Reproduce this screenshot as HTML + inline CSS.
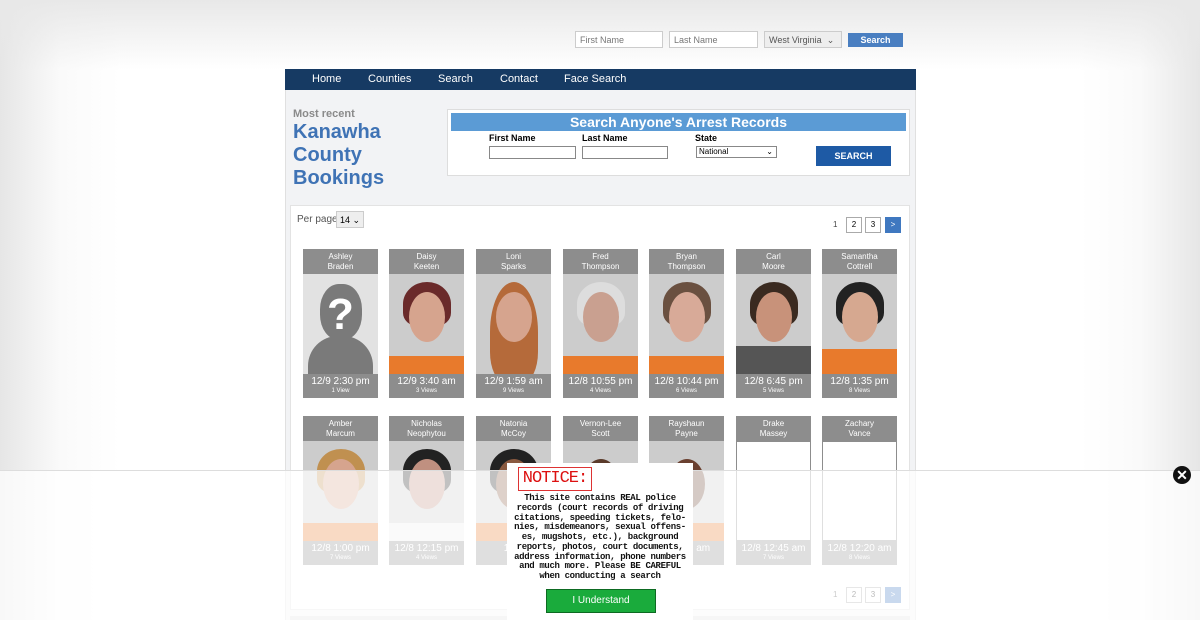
<!DOCTYPE html><html><head><meta charset="utf-8"><style>
*{box-sizing:border-box;margin:0;padding:0}
body{width:1200px;height:620px;overflow:hidden;font-family:"Liberation Sans",sans-serif;background:linear-gradient(90deg,#e6e6e6 0,#fafafa 60px,#fff 120px,#fff 1080px,#fafafa 1140px,#e6e6e6 1200px);position:relative}
.top{position:absolute;left:0;top:0;width:1200px;height:70px;background:linear-gradient(#e8e8e8,rgba(255,255,255,0))}
.ab{position:absolute}
.inp{border:1px solid #ccc;background:#fff;font-size:9px;color:#777;padding:3px 4px;height:17px;white-space:nowrap}
.nav{left:285px;top:69px;width:631px;height:21px;background:#163a63;color:#fff;font-size:11px}
.nav span{position:absolute;top:4px}
.main{left:285px;top:90px;width:631px;height:530px;background:#f2f3f5;border-left:1px solid #e0e0e0;border-right:1px solid #e0e0e0}
.card{position:absolute;width:75px;height:149px;background:#8d8d8d;color:#fff;text-align:center}
.card .h{height:25px;font-size:8px;line-height:10px;padding-top:3px}
.card .p{height:100px;background:#ccc;position:relative;overflow:hidden}
.card .d{font-size:10px;padding-top:2px}
.card .v{font-size:6px;margin-top:1px}
.face{position:absolute;left:20px;top:18px;width:36px;height:50px;border-radius:50%;background:#d6a48e}
.hair{position:absolute;left:14px;top:8px;width:48px;height:44px;border-radius:50% 50% 30% 30%}
.orange{position:absolute;left:0;bottom:0;width:75px;height:18px;background:#e87a2c}
</style></head><body>
<div class="top"></div>
<div class="ab inp" style="left:575px;top:31px;width:88px">First Name</div>
<div class="ab inp" style="left:669px;top:31px;width:89px">Last Name</div>
<div class="ab inp" style="left:764px;top:31px;width:78px;background:#eee;color:#555">West Virginia &nbsp;⌄</div>
<div class="ab" style="left:848px;top:33px;width:55px;height:14px;background:#4a7fc1;color:#fff;font-size:9px;font-weight:bold;text-align:center;line-height:14px">Search</div>
<div class="ab nav"><span style="left:27px">Home</span><span style="left:83px">Counties</span><span style="left:153px">Search</span><span style="left:215px">Contact</span><span style="left:279px">Face Search</span></div>
<div class="ab main"></div>
<div class="ab" style="left:293px;top:108px;font-size:11px;color:#8a8a8a;font-weight:bold">Most recent</div>
<div class="ab" style="left:293px;top:121px;font-size:20px;line-height:23px;color:#3f73b5;font-weight:bold">Kanawha<br>County<br>Bookings</div>
<div class="ab" style="left:447px;top:109px;width:463px;height:67px;background:#fff;border:1px solid #ddd"></div>
<div class="ab" style="left:451px;top:113px;width:455px;height:18px;background:#5b9bd5;color:#fff;font-weight:bold;font-size:14px;text-align:center;line-height:18px">Search Anyone's Arrest Records</div>
<div class="ab" style="left:489px;top:133px;font-size:9px;font-weight:bold">First Name</div>
<div class="ab" style="left:582px;top:133px;font-size:9px;font-weight:bold">Last Name</div>
<div class="ab" style="left:695px;top:133px;font-size:9px;font-weight:bold">State</div>
<div class="ab" style="left:489px;top:146px;width:87px;height:13px;border:1px solid #888;background:#fff"></div>
<div class="ab" style="left:582px;top:146px;width:86px;height:13px;border:1px solid #888;background:#fff"></div>
<div class="ab" style="left:696px;top:146px;width:81px;height:12px;border:1px solid #888;background:#fff;font-size:8px;padding-left:2px;line-height:10px">National<span style="position:absolute;right:3px">⌄</span></div>
<div class="ab" style="left:816px;top:146px;width:75px;height:20px;background:#1e5aa5;color:#fff;font-size:9px;font-weight:bold;text-align:center;line-height:20px">SEARCH</div>
<div class="ab" style="left:290px;top:205px;width:620px;height:405px;background:#fff;border:1px solid #e3e3e3"></div>
<div class="ab" style="left:297px;top:214px;font-size:10px;color:#555">Per page</div>
<div class="ab" style="left:336px;top:211px;width:28px;height:17px;border:1px solid #ccc;background:#eee;font-size:9px;padding:3px;white-space:nowrap">14 ⌄</div>
<div class="ab" style="left:833px;top:220px;font-size:8px;color:#444">1</div>
<div class="ab" style="left:846px;top:217px;width:16px;height:16px;border:1px solid #aaa;font-size:8px;text-align:center;line-height:14px">2</div>
<div class="ab" style="left:865px;top:217px;width:16px;height:16px;border:1px solid #aaa;font-size:8px;text-align:center;line-height:14px">3</div>
<div class="ab" style="left:885px;top:217px;width:16px;height:16px;background:#3f78c0;color:#fff;font-size:8px;text-align:center;line-height:16px">&gt;</div>

<div class="card" style="left:303px;top:249px"><div class="h">Ashley<br>Braden</div><div class="p" style="background:#e2e2e2"><div style="position:absolute;left:17px;top:10px;width:42px;height:56px;border-radius:45%;background:#7a7a7a"></div><div style="position:absolute;left:5px;top:62px;width:65px;height:40px;border-radius:30px 30px 0 0;background:#7a7a7a"></div><div style="position:absolute;left:0;top:16px;width:75px;text-align:center;font-size:44px;font-weight:bold;color:#fff">?</div></div><div class="d">12/9 2:30 pm</div><div class="v">1 View</div></div>
<div class="card" style="left:389px;top:249px"><div class="h">Daisy<br>Keeten</div><div class="p"><div class="hair" style="background:#6a2a2a"></div><div class="face"></div><div class="orange"></div></div><div class="d">12/9 3:40 am</div><div class="v">3 Views</div></div>
<div class="card" style="left:476px;top:249px"><div class="h">Loni<br>Sparks</div><div class="p"><div class="hair" style="background:#b56a3a;height:100px"></div><div class="face"></div></div><div class="d">12/9 1:59 am</div><div class="v">9 Views</div></div>
<div class="card" style="left:563px;top:249px"><div class="h">Fred<br>Thompson</div><div class="p"><div class="hair" style="background:#ddd"></div><div class="face" style="background:#c9a090"></div><div class="orange"></div></div><div class="d">12/8 10:55 pm</div><div class="v">4 Views</div></div>
<div class="card" style="left:649px;top:249px"><div class="h">Bryan<br>Thompson</div><div class="p"><div class="hair" style="background:#6a5040"></div><div class="face" style="background:#d8aa98"></div><div class="orange"></div></div><div class="d">12/8 10:44 pm</div><div class="v">6 Views</div></div>
<div class="card" style="left:736px;top:249px"><div class="h">Carl<br>Moore</div><div class="p"><div class="hair" style="background:#3a2a20"></div><div class="face" style="background:#c8927a"></div><div class="orange" style="background:#555;height:28px"></div></div><div class="d">12/8 6:45 pm</div><div class="v">5 Views</div></div>
<div class="card" style="left:822px;top:249px"><div class="h">Samantha<br>Cottrell</div><div class="p"><div class="hair" style="background:#222"></div><div class="face" style="background:#d6a890"></div><div class="orange" style="height:25px"></div></div><div class="d">12/8 1:35 pm</div><div class="v">8 Views</div></div>

<div class="card" style="left:303px;top:416px"><div class="h">Amber<br>Marcum</div><div class="p"><div class="hair" style="background:#c09050"></div><div class="face"></div><div class="orange"></div></div><div class="d">12/8 1:00 pm</div><div class="v">7 Views</div></div>
<div class="card" style="left:389px;top:416px"><div class="h">Nicholas<br>Neophytou</div><div class="p"><div class="hair" style="background:#222"></div><div class="face" style="background:#c09080"></div><div class="orange" style="background:#eee"></div></div><div class="d">12/8 12:15 pm</div><div class="v">4 Views</div></div>
<div class="card" style="left:476px;top:416px"><div class="h">Natonia<br>McCoy</div><div class="p"><div class="hair" style="background:#222"></div><div class="face" style="background:#8a5a40"></div><div class="orange"></div></div><div class="d">12/8</div><div class="v">.</div></div>
<div class="card" style="left:563px;top:416px"><div class="h">Vernon-Lee<br>Scott</div><div class="p"><div class="face" style="background:#5a3a2a"></div><div class="orange"></div></div><div class="d"></div></div>
<div class="card" style="left:649px;top:416px"><div class="h">Rayshaun<br>Payne</div><div class="p"><div class="face" style="background:#6a4030"></div><div class="orange"></div></div><div class="d">&nbsp;&nbsp;&nbsp;&nbsp;&nbsp;&nbsp;&nbsp;&nbsp;&nbsp;5 am</div></div>
<div class="card" style="left:736px;top:416px"><div class="h">Drake<br>Massey</div><div class="p" style="background:#fff;border:1px solid #8d8d8d"></div><div class="d">12/8 12:45 am</div><div class="v">7 Views</div></div>
<div class="card" style="left:822px;top:416px"><div class="h">Zachary<br>Vance</div><div class="p" style="background:#fff;border:1px solid #8d8d8d"></div><div class="d">12/8 12:20 am</div><div class="v">8 Views</div></div>
<div class="ab" style="left:833px;top:590px;font-size:8px;color:#444">1</div>
<div class="ab" style="left:846px;top:587px;width:16px;height:16px;border:1px solid #aaa;font-size:8px;text-align:center;line-height:14px">2</div>
<div class="ab" style="left:865px;top:587px;width:16px;height:16px;border:1px solid #aaa;font-size:8px;text-align:center;line-height:14px">3</div>
<div class="ab" style="left:885px;top:587px;width:16px;height:16px;background:#3f78c0;color:#fff;font-size:8px;text-align:center;line-height:16px">&gt;</div>
<div class="ab" style="left:290px;top:616px;width:620px;height:4px;background:#ddd"></div>

<div class="ab" style="left:0;top:470px;width:1200px;height:150px;background:rgba(255,255,255,0.72);border-top:1px solid #ddd"></div>
<div class="ab" style="left:1173px;top:466px;width:18px;height:18px;border-radius:50%;background:#111;color:#fff;font-size:14px;font-weight:bold;text-align:center;line-height:18px">✕</div>
<div class="ab" style="left:507px;top:463px;width:186px;height:157px;background:#fff"></div>
<div class="ab" style="left:518px;top:467px;width:74px;height:24px;border:1px solid #d33;color:#d11;font-family:'Liberation Mono',monospace;font-size:17px;text-align:center;line-height:22px;letter-spacing:-1px">NOTICE:</div>
<div class="ab" style="left:507px;top:494px;width:186px;font-family:'Liberation Mono',monospace;font-size:9px;letter-spacing:-0.35px;line-height:9.75px;text-align:center;color:#111;white-space:nowrap;font-weight:bold">This site contains REAL police<br>records (court records of driving<br>citations, speeding tickets, felo-<br>nies, misdemeanors, sexual offens-<br>es, mugshots, etc.), background<br>reports, photos, court documents,<br>address information, phone numbers<br>and much more. Please BE CAREFUL<br>when conducting a search</div>
<div class="ab" style="left:546px;top:589px;width:110px;height:24px;background:#1aab3c;border:1px solid #0d6a22;color:#fff;font-size:10px;text-align:center;line-height:22px">I Understand</div>
</body></html>
